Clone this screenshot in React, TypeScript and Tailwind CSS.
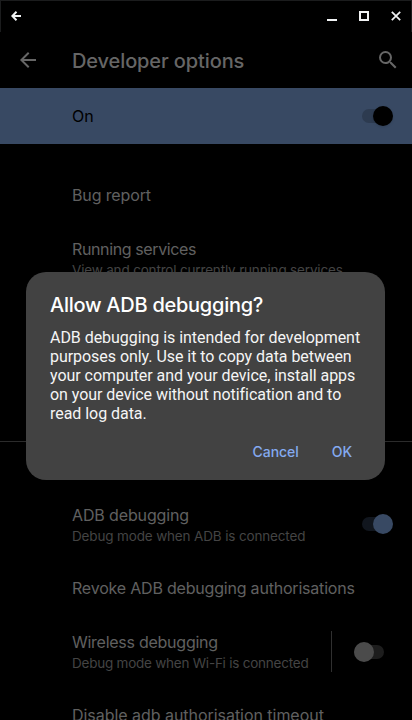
import React from "react";

type SwitchProps = { on?: boolean; track: string; thumb: string };

function Switch({ on = false, track, thumb }: SwitchProps) {
  return (
    <span className={`flex h-[14px] w-[30px] shrink-0 items-center rounded-full ${track} ${on ? "justify-end" : "justify-start"}`}>
      <span className={`h-5 w-5 shrink-0 rounded-full ${on ? "-mr-[0.5px]" : "-ml-[0.5px]"} ${thumb}`} />
    </span>
  );
}

type RowProps = { title: string; titleClass: string; sub?: string; subClass?: string; children?: React.ReactNode; className: string };

function Row({ title, titleClass, sub, subClass = "", children, className }: RowProps) {
  return (
    <div className={`flex shrink-0 justify-between pl-[72px] ${className}`}>
      <div className="whitespace-nowrap">
        <div className={`text-[16px] leading-[21px] text-[#606060] ${titleClass}`}>{title}</div>
        {sub && <div className={`text-[13.5px] leading-5 text-[#444444] ${subClass}`}>{sub}</div>}
      </div>
      {children}
    </div>
  );
}

export default function App() {
  return (
    <div className="relative flex h-[720px] w-[412px] flex-col overflow-hidden bg-black font-['Inter',sans-serif]">
      <div className="flex h-8 shrink-0 items-center justify-between border-x border-t border-[#1b1c1d] px-[10px] pb-px text-[#f1f3f4]">
        <svg width="10" height="10" viewBox="0 0 10 10" fill="none" stroke="currentColor" strokeWidth="2">
          <path d="M10 5H1.5M5.500 .8 1.300 5l4.200 4.200" />
        </svg>
        <div className="flex gap-[22px]">
          <svg width="10" height="10" viewBox="0 0 10 10"><path d="M0 8h10v2H0z" fill="currentColor" /></svg>
          <svg width="10" height="10" viewBox="0 0 10 10" fill="none" stroke="currentColor" strokeWidth="2"><path d="M1 1h8v8H1z" /></svg>
          <svg width="10" height="10" viewBox="0 0 10 10" stroke="currentColor" strokeWidth="1.7"><path d="m.8.8 8.400 8.400M9.200.8.8 9.200" /></svg>
        </div>
      </div>

      <header className="flex h-14 shrink-0 items-center pr-3 pl-4 text-[#666666]">
        <svg width="24" height="24" viewBox="0 0 24 24" fill="currentColor">
          <path d="M20 11H7.830l5.590-5.590L12 4l-8 8 8 8 1.410-1.410L7.830 13H20v-2z" />
        </svg>
        <h1 className="ml-8 flex-1 pt-0.5 text-[20px] leading-7 font-medium tracking-[-0.11px]">Developer options</h1>
        <svg width="24" height="24" viewBox="0 0 24 24" fill="currentColor">
          <path d="M15.5 14h-.79l-.28-.27A6.471 6.471 0 0 0 16 9.500 6.500 6.500 0 1 0 9.500 16c1.610 0 3.090-.59 4.230-1.570l.27.28v.79l5 4.990L20.490 19l-4.990-5zm-6 0C7.010 14 5 11.990 5 9.500S7.010 5 9.500 5 14 7.010 14 9.500 11.990 14 9.500 14z" />
        </svg>
      </header>

      <div className="flex h-14 shrink-0 items-center justify-between bg-[#384963] pr-5 pl-[72px]">
        <span className="text-[16px] text-black">On</span>
        <Switch on track="bg-[#2d3b50]" thumb="bg-black shadow-sm" />
      </div>

      <Row title="Bug report" titleClass="tracking-[-0.13px]" className="mt-6 h-[55px] pt-[17px]" />
      <Row
        title="Running services"
        titleClass="tracking-[-0.38px]"
        sub="View and control currently running services"
        subClass="tracking-[-0.17px]"
        className="h-[73px] pt-4"
      />
      <div className="mt-[145px] h-px shrink-0 bg-[#2b2b2b]" />

      <Row
        title="ADB debugging"
        titleClass="tracking-[-0.13px]"
        sub="Debug mode when ADB is connected"
        subClass="tracking-[-0.15px]"
        className="mt-[47px] h-[73px] pt-4 pr-5"
      >
        <div className="pt-3"><Switch on track="bg-[#11161e]" thumb="bg-[#384963]" /></div>
      </Row>
      <Row title="Revoke ADB debugging authorisations" titleClass="tracking-[-0.2px]" className="h-[54px] pt-4" />
      <Row
        title="Wireless debugging"
        titleClass="tracking-[-0.26px]"
        sub="Debug mode when Wi-Fi is connected"
        subClass="tracking-[-0.23px]"
        className="h-[73px] pt-4 pr-7"
      >
        <div className="-mt-px flex h-[41px] items-center border-l border-[#303030] pl-[22px]">
          <Switch track="bg-[#1d1d1d]" thumb="bg-[#4b4b4b]" />
        </div>
      </Row>
      <Row title="Disable adb authorisation timeout" titleClass="tracking-[-0.04px]" className="h-14 pt-4" />

      <div role="dialog" className="absolute top-[272px] left-[26px] flex h-[208px] w-[359px] flex-col rounded-[20px] bg-[#424242] px-6 pt-5">
        <h2 className="text-[20px] leading-[27px] font-medium tracking-[-0.26px] whitespace-nowrap text-white">Allow ADB debugging?</h2>
        <p className="mt-[9px] font-['Roboto',sans-serif] text-[16px] leading-[19px] tracking-[-0.045px] whitespace-nowrap text-[#f5f5f5]">
          ADB debugging is intended for development<br />purposes only. Use it to copy data between<br />your computer and your device, install apps<br />on your device without notification and to<br />read log data.
        </p>
        <div className="mt-[19px] flex justify-end gap-[33px] pr-[9px] text-[14px] leading-5 font-medium tracking-[-0.05px] text-[#84aaf0]">
          <button>Cancel</button>
          <button>OK</button>
        </div>
      </div>
    </div>
  );
}
